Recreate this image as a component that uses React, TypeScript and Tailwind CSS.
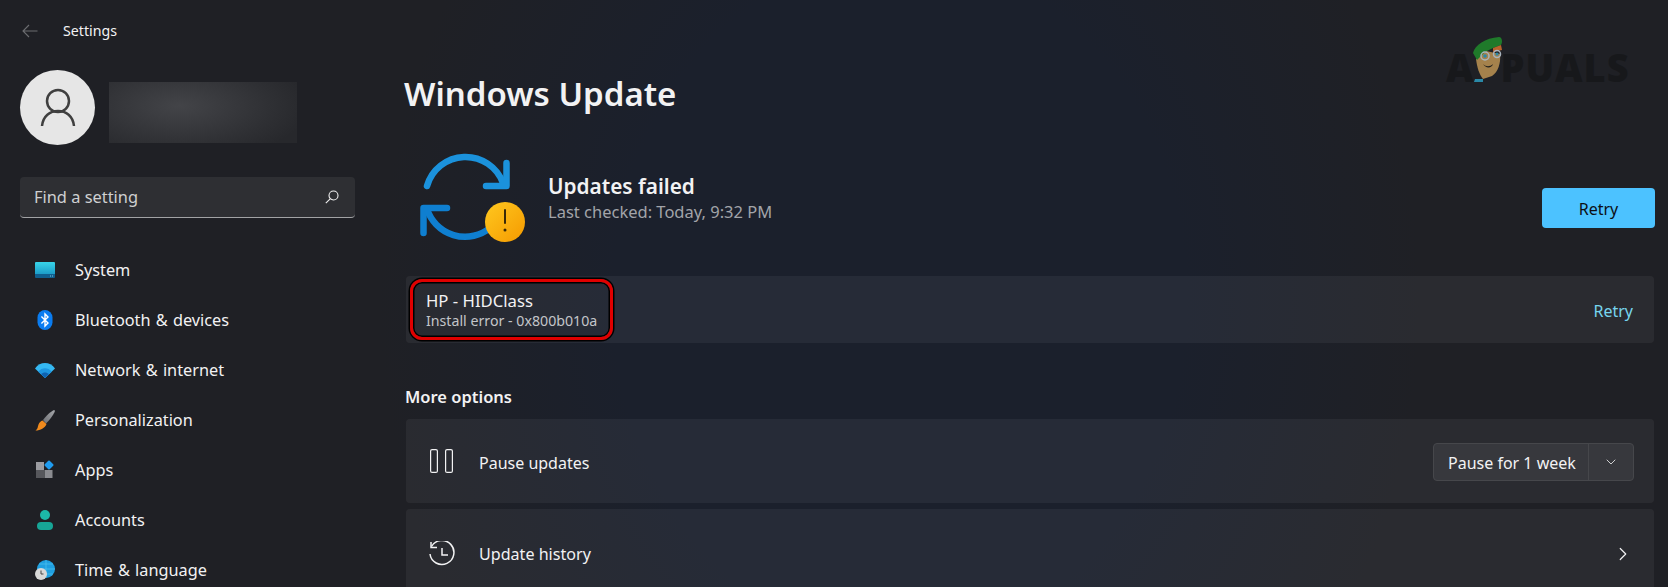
import React from 'react';
import { ChevronDown, ChevronRight } from 'lucide-react';

const NAV_ITEMS = [
  { label: 'System', icon: <SystemIcon /> },
  { label: 'Bluetooth & devices', icon: <BluetoothIcon /> },
  { label: 'Network & internet', icon: <WifiIcon /> },
  { label: 'Personalization', icon: <BrushIcon /> },
  { label: 'Apps', icon: <AppsIcon /> },
  { label: 'Accounts', icon: <AccountsIcon /> },
  { label: 'Time & language', icon: <TimeIcon /> },
];

function SystemIcon() {
  return (
    <svg width="20" height="16" viewBox="0 0 20 16">
      <defs>
        <linearGradient id="sys" x1="0" y1="0" x2="0" y2="1">
          <stop offset="0" stopColor="#38d4e8" />
          <stop offset="1" stopColor="#1c9dc9" />
        </linearGradient>
      </defs>
      <path d="M1 0h18a1 1 0 0 1 1 1v11H0V1a1 1 0 0 1 1-1z" fill="url(#sys)" />
      <path d="M0 12h20v3a1 1 0 0 1-1 1H1a1 1 0 0 1-1-1z" fill="#0f5f8f" />
      <rect x="15" y="13.5" width="1" height="1" fill="#7fc8e0" />
      <rect x="17" y="13.5" width="1" height="1" fill="#7fc8e0" />
    </svg>
  );
}

function BluetoothIcon() {
  return (
    <svg width="16" height="20" viewBox="0 0 16 20">
      <rect width="15" height="20" x="0.5" rx="7.5" fill="#0a7cf0" />
      <path d="M4.4 6.6 11 12.9 8 16V4l3 3.1-6.6 6.3" fill="none" stroke="#fff" strokeWidth="1.4" />
    </svg>
  );
}

function WifiIcon() {
  return (
    <svg width="20" height="15" viewBox="0 0 20 15">
      <path d="M0 5.500C5-1.800 15-1.800 20 5.500L10 15z" fill="#35b8f2" />
      <path d="M3.200 8.700C7 4.200 13 4.200 16.800 8.700L10 15z" fill="#1e96e0" />
      <path d="M6 11C8.400 8.900 11.600 8.900 14 11L10 15z" fill="#0f62b0" />
    </svg>
  );
}

function BrushIcon() {
  return (
    <svg width="20" height="21" viewBox="0 0 20 21">
      <defs>
        <linearGradient id="brush" x1="1" y1="0" x2="0" y2="1">
          <stop offset="0" stopColor="#a5a7ab" />
          <stop offset="1" stopColor="#6d6f74" />
        </linearGradient>
      </defs>
      <path d="M19 0c1 0 1 1 .6 2-1.500 3.500-5 8-8.600 11.500L8 10C11 6 15.500 1.500 19 0z" fill="url(#brush)" />
      <path d="M7.500 10.500l4 3.500c-1.500 4-6 6.500-11 6.500 2.500-1.500 2-3.500 3-6 .8-2 2.300-3.500 4-4z" fill="#f08a1d" />
    </svg>
  );
}

function AppsIcon() {
  return (
    <svg width="20" height="20" viewBox="0 0 20 20">
      <rect x="1" y="2" width="8" height="8" fill="#9b9ca1" />
      <rect x="1" y="10" width="8" height="8" fill="#56575c" />
      <rect x="9.500" y="10" width="8" height="8" fill="#8a8b90" />
      <rect x="10.500" y="1.500" width="7" height="7" rx="1" fill="#1f9cf0" transform="rotate(45 14 5)" />
    </svg>
  );
}

function AccountsIcon() {
  return (
    <svg width="16" height="20" viewBox="0 0 16 20">
      <circle cx="8" cy="5" r="5" fill="#1cb8a8" />
      <rect x="0" y="12" width="16" height="8" rx="4" fill="#17a596" />
    </svg>
  );
}

function TimeIcon() {
  return (
    <svg width="20" height="20" viewBox="0 0 20 20">
      <circle cx="11" cy="9" r="9" fill="#1f9fe0" />
      <path d="M11 0v18M2 9h18M4 4h14M4 14h14" stroke="#4fc3ee" strokeWidth="0.7" fill="none" />
      <circle cx="6" cy="14" r="6" fill="#d8d8d8" />
      <path d="M6 10.500V14h2.500" stroke="#444" strokeWidth="1" fill="none" />
    </svg>
  );
}

function UpdateFailedIcon() {
  return (
    <svg width="120" height="96" viewBox="25 18 120 96">
      <defs>
        <linearGradient id="amber" x1="0" y1="0" x2="1" y2="1">
          <stop offset="0" stopColor="#ffc81f" />
          <stop offset="1" stopColor="#f59a00" />
        </linearGradient>
      </defs>
      <g fill="none" stroke="#1b92dc" strokeWidth="6.500" strokeLinecap="round" strokeLinejoin="round">
        <path d="M37 56A40 40 0 0 1 113 53" />
        <path d="M116.500 33V56H96" />
        <path d="M33.500 103V78H57" stroke="#0f7fd0" />
        <path d="M37 79A40 40 0 0 0 100 98" stroke="#0f7fd0" />
      </g>
      <circle cx="115" cy="92" r="20" fill="url(#amber)" />
      <rect x="114" y="79" width="2" height="15" rx="1" fill="#3a2a08" />
      <circle cx="115" cy="100" r="1.500" fill="#3a2a08" />
    </svg>
  );
}

function AppualsMark() {
  return (
    <svg width="34" height="46" viewBox="0 0 34 46" className="-mx-[4px] -mt-[14px]">
      <path d="M5 22l10-8 14 3c1 9-2 18-8 22l-9 3c-4-5-6-12-7-20z" fill="#a5824c" />
      <path d="M2 16C4 8 14 1 28 0c3 0 4 5 2 8l-8 3-8 4-8 8z" fill="#1f7a2a" />
      <path d="M22 11l8-3 1 5-9 2z" fill="#b8622c" />
      <circle cx="14" cy="19" r="4" fill="none" stroke="#a9b4bd" strokeWidth="1.500" />
      <circle cx="26" cy="17" r="3.500" fill="none" stroke="#a9b4bd" strokeWidth="1.500" />
      <circle cx="14" cy="19" r="1.800" fill="#2a89a8" />
      <circle cx="26" cy="17" r="1.500" fill="#2a89a8" />
      <path d="M12 27c3 3 7 3 10 0-1 4-7 5-10 0z" fill="#22201c" />
      <path d="M4 42h8v3H3z" fill="#2a89a8" />
    </svg>
  );
}

export default function App() {
  return (
    <div className="relative flex h-[587px] w-full overflow-hidden bg-[radial-gradient(ellipse_520px_620px_at_900px_300px,#1b202c_0%,#1b202c_55%,#1f2025_100%)] font-['Noto_Sans','Open_Sans',sans-serif] text-[#f2f2f3]">
      {/* Sidebar */}
      <aside className="flex w-[380px] shrink-0 flex-col">
        <div className="flex h-[62px] shrink-0 items-center pl-[22px]">
          <svg width="16" height="14" viewBox="0 0 16 14" fill="none" stroke="#6c6d71" strokeWidth="1.100">
            <path d="M15.500 7H1M7 1 1 7l6 6" />
          </svg>
          <span className="ml-[25px] text-[14.200px] leading-none">Settings</span>
        </div>

        <div className="ml-[20px] mt-[8px] flex shrink-0 items-center">
          <div className="flex h-[75px] w-[75px] items-center justify-center rounded-full bg-[#e6e6e6]">
            <svg width="36" height="40" viewBox="0 0 36 40" fill="none" stroke="#3f3f3f" strokeWidth="2.500">
              <circle cx="18" cy="13" r="11" />
              <path d="M2 38C3 28 10 23 18 23s15 5 16 15" />
            </svg>
          </div>
          <div className="ml-[14px] mt-[10px] h-[61px] w-[188px] bg-[radial-gradient(ellipse_130px_55px_at_70px_24px,#434448,#2f3034_70%,#27282c)]" />
        </div>

        <div className="ml-[20px] mt-[32px] flex h-[41px] w-[335px] shrink-0 items-center justify-between rounded-[4px] border-b border-b-[#a2a3a5] bg-[#2e2f33] pl-[14px] pr-[16px]">
          <span className="text-[16.400px] text-[#cfd0d1]">Find a setting</span>
          <svg width="14" height="14" viewBox="0 0 14 14" fill="none" stroke="#f0f0f0" strokeWidth="1.100">
            <circle cx="8.500" cy="5.500" r="4.500" />
            <path d="M5.200 8.800.8 13.200" />
          </svg>
        </div>

        <nav className="mt-[27px] flex shrink-0 flex-col">
          {NAV_ITEMS.map((item) => (
            <div key={item.label} className="flex h-[50px] items-center pl-[35px]">
              <span className="flex w-[20px] items-center justify-center">{item.icon}</span>
              <span className="ml-[20px] text-[16.300px] leading-none [word-spacing:1px]">{item.label}</span>
            </div>
          ))}
        </nav>
      </aside>

      {/* Main */}
      <main className="min-w-0 flex-1 pl-[26px] pr-[14px]">
        <h1 className="-ml-[2px] mt-[72px] text-[33px] font-semibold leading-[44px]">Windows Update</h1>

        <div className="mt-[32px] flex h-[96px] items-start pl-[9px]">
          <UpdateFailedIcon />
          <div className="ml-[13px] pt-[24px]">
            <p className="text-[20.800px] font-semibold leading-[28px]">Updates failed</p>
            <p className="text-[16.500px] leading-[24px] text-[#a2a4a9]">Last checked: Today, 9:32 PM</p>
          </div>
          <button className="-mr-[1px] ml-auto mt-[40px] h-[40px] w-[113px] rounded-[4px] bg-[#4cc2ff] pt-[1px] text-[16px] text-[#0c0f14]">
            Retry
          </button>
        </div>

        <div className="mt-[32px] flex h-[67px] items-center justify-between rounded-[4px] bg-white/[0.05] pl-[4px] pr-[21px]">
          <div className="flex h-[61px] w-[203px] flex-col justify-center rounded-[12px] border-[3px] border-[#e00000] pl-[13px] shadow-[0_0_0_1.500px_#000,inset_0_0_0_1.500px_#000]">
            <p className="text-[16.700px] leading-[22px]">HP - HIDClass</p>
            <p className="text-[14.200px] leading-[18px] text-[#c3c5c9]">Install error - 0x800b010a</p>
          </div>
          <span className="pt-[2px] text-[16px] text-[#77d5ee]">Retry</span>
        </div>

        <h2 className="-ml-[1px] mt-[42px] text-[16.500px] font-semibold leading-[24px]">More options</h2>

        <div className="mt-[10px] flex h-[84px] items-center justify-between rounded-[4px] bg-white/[0.05] pl-[24px] pr-[20px]">
          <div className="flex items-center">
            <svg width="24" height="24" viewBox="0 0 24 24" fill="none" stroke="#f2f2f3" strokeWidth="1.200">
              <rect x="0.600" y="0.600" width="6.800" height="22.800" rx="1.500" />
              <rect x="15.600" y="0.600" width="6.800" height="22.800" rx="1.500" />
            </svg>
            <span className="ml-[25px] pt-[3px] text-[16px]">Pause updates</span>
          </div>
          <div className="mt-[2px] flex h-[38px] w-[201px] items-center rounded-[4px] border border-[#46474b] bg-[#37383d]">
            <span className="w-[155px] border-r border-r-[#46474b] pl-[14px] pt-[2px] text-[16px] leading-[34px]">Pause for 1 week</span>
            <ChevronDown className="ml-[14px]" size={16} strokeWidth={1.400} color="#dadbdc" />
          </div>
        </div>

        <div className="mt-[6px] flex h-[86px] items-center justify-between rounded-[4px] bg-white/[0.05] pl-[23px] pr-[20px] pt-[3px]">
          <div className="flex items-center">
            <svg width="26" height="26" viewBox="0 0 26 26" fill="none" stroke="#f2f2f3" strokeWidth="1.500">
              <path d="M2.500 5.500A12 12 0 1 1 1 13" />
              <path d="M2 1v5.500h6" />
              <path d="M13 7v7h6" />
            </svg>
            <span className="ml-[24px] pt-[1px] text-[16.100px]">Update history</span>
          </div>
          <ChevronRight size={22} strokeWidth={1.300} color="#f2f2f3" />
        </div>
      </main>

      {/* Appuals watermark */}
      <div className="absolute left-[1446px] top-[48px] flex items-center text-[38px] font-black leading-none tracking-[1px] text-[#17181b]">
        <span>A</span>
        <AppualsMark />
        <span>PUALS</span>
      </div>
    </div>
  );
}
